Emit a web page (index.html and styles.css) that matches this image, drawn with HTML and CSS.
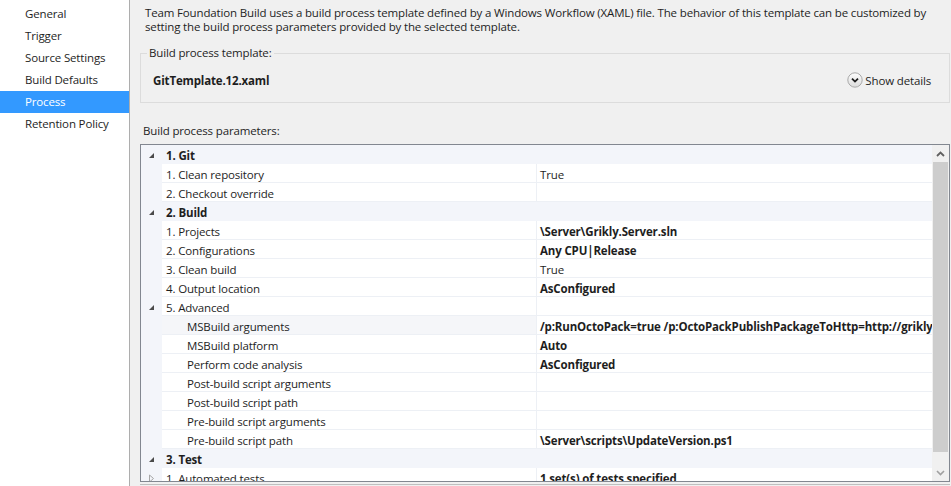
FILE: index.html
```html
<!DOCTYPE html>
<html>
<head>
<meta charset="utf-8">
<link rel="stylesheet" href="styles.css">
</head>
<body>
<nav class="nav">
  <div class="nav-item">General</div>
  <div class="nav-item">Trigger</div>
  <div class="nav-item">Source Settings</div>
  <div class="nav-item">Build Defaults</div>
  <div class="nav-item selected">Process</div>
  <div class="nav-item">Retention Policy</div>
</nav>
<main class="main">
  <div class="desc">
    <div class="line">Team Foundation Build uses a build process template defined by a Windows Workflow (XAML) file. The behavior of this template can be customized by</div>
    <div class="line">setting the build process parameters provided by the selected template.</div>
  </div>
  <fieldset class="group">
    <legend class="legend">Build process template:</legend>
    <div class="template-row">
      <span class="template-name">GitTemplate.12.xaml</span>
      <span class="details">
        <svg class="details-icon" width="16" height="16" viewBox="0 0 16 16">
          <defs>
            <linearGradient id="g" x1="0" y1="0" x2="0" y2="1">
              <stop offset="0" stop-color="#fdfdfd"/>
              <stop offset="1" stop-color="#dcdcdc"/>
            </linearGradient>
          </defs>
          <circle cx="8" cy="8" r="7.2" fill="url(#g)" stroke="#a9a9a9" stroke-width="1"/>
          <path d="M5 6.6 L8 9.6 L11 6.6" fill="none" stroke="#1e1e1e" stroke-width="1.8"/>
        </svg>
        Show details
      </span>
    </div>
  </fieldset>
  <div class="params-label">Build process parameters:</div>
  <div class="grid">
    <div class="rows">
      <div class="row cat"><span class="gut"><svg class="exp" width="7" height="7" viewBox="0 0 7 7"><path d="M6 1 L6 6 L1 6 Z" fill="#4a4a4a"/></svg></span><span class="name b">1. Git</span></div>
      <div class="row"><span class="gut"></span><span class="name">1. Clean repository</span><span class="val">True</span></div>
      <div class="row"><span class="gut"></span><span class="name">2. Checkout override</span><span class="val"></span></div>
      <div class="row cat"><span class="gut"><svg class="exp" width="7" height="7" viewBox="0 0 7 7"><path d="M6 1 L6 6 L1 6 Z" fill="#4a4a4a"/></svg></span><span class="name b">2. Build</span></div>
      <div class="row"><span class="gut"></span><span class="name">1. Projects</span><span class="val b">\Server\Grikly.Server.sln</span></div>
      <div class="row"><span class="gut"></span><span class="name">2. Configurations</span><span class="val b">Any CPU|Release</span></div>
      <div class="row"><span class="gut"></span><span class="name">3. Clean build</span><span class="val">True</span></div>
      <div class="row"><span class="gut"></span><span class="name">4. Output location</span><span class="val b">AsConfigured</span></div>
      <div class="row"><span class="gut"><svg class="exp" width="7" height="7" viewBox="0 0 7 7"><path d="M6 1 L6 6 L1 6 Z" fill="#4a4a4a"/></svg></span><span class="name">5. Advanced</span><span class="val"></span></div>
      <div class="row"><span class="gut"></span><span class="name sub hl">MSBuild arguments</span><span class="val b">/p:RunOctoPack=true /p:OctoPackPublishPackageToHttp=http://grikly.octopus/nuget/packages</span></div>
      <div class="row"><span class="gut"></span><span class="name sub">MSBuild platform</span><span class="val b">Auto</span></div>
      <div class="row"><span class="gut"></span><span class="name sub">Perform code analysis</span><span class="val b">AsConfigured</span></div>
      <div class="row"><span class="gut"></span><span class="name sub">Post-build script arguments</span><span class="val"></span></div>
      <div class="row"><span class="gut"></span><span class="name sub">Post-build script path</span><span class="val"></span></div>
      <div class="row"><span class="gut"></span><span class="name sub">Pre-build script arguments</span><span class="val"></span></div>
      <div class="row"><span class="gut"></span><span class="name sub">Pre-build script path</span><span class="val b">\Server\scripts\UpdateVersion.ps1</span></div>
      <div class="row cat"><span class="gut"><svg class="exp" width="7" height="7" viewBox="0 0 7 7"><path d="M6 1 L6 6 L1 6 Z" fill="#4a4a4a"/></svg></span><span class="name b">3. Test</span></div>
      <div class="row"><span class="gut"><svg class="exp" width="7" height="9" viewBox="0 0 7 9"><path d="M1.5 1 L5.5 4.5 L1.5 8 Z" fill="none" stroke="#a6a6a6" stroke-width="1"/></svg></span><span class="name">1. Automated tests</span><span class="val b">1 set(s) of tests specified.</span></div>
    </div>
    <div class="scrollbar">
      <div class="arrow">
        <svg width="9" height="6" viewBox="0 0 9 6"><path d="M1 5 L4.5 1.5 L8 5" fill="none" stroke="#606060" stroke-width="1.8"/></svg>
      </div>
      <div class="track"><div class="thumb"></div></div>
      <div class="arrow">
        <svg width="9" height="6" viewBox="0 0 9 6"><path d="M1 1 L4.5 4.5 L8 1" fill="none" stroke="#a0a0a0" stroke-width="1.6"/></svg>
      </div>
    </div>
  </div>
  <div class="bottom-line"></div>
</main>
</body>
</html>
```
FILE: styles.css
```css
* { box-sizing: border-box; }
html, body { margin: 0; padding: 0; }
body {
  width: 951px;
  height: 486px;
  overflow: hidden;
  display: flex;
  background: #f0f0f0;
  font-family: "Segoe UI", "Open Sans", sans-serif;
  font-size: 11.5px;
  letter-spacing: -0.15px;
  color: #1e1e1e;
}
.nav {
  width: 130px;
  flex: none;
  background: #ffffff;
  border-right: 1px solid #adadad;
  padding-top: 3px;
}
.nav-item {
  height: 22px;
  line-height: 21px;
  padding-left: 25px;
  white-space: nowrap;
}
.nav-item.selected {
  background: #3399ff;
  color: #ffffff;
}
.main {
  flex: 1;
  min-width: 0;
  padding: 6px 1px 0 10px;
  display: flex;
  flex-direction: column;
}
.desc { padding-left: 5px; }
.line { line-height: 14px; white-space: nowrap; }
.group {
  margin: 12px 0 0 0;
  padding: 13px 18px 15px 12px;
  border: 1px solid #dcdcdc;
  min-width: 0;
}
.legend {
  padding: 0 2px;
  margin-left: -6px;
  line-height: 14px;
}
.template-row {
  display: flex;
  justify-content: space-between;
  align-items: center;
  height: 14px;
}
.template-name { font-weight: bold; }
.details {
  display: flex;
  align-items: center;
  gap: 2px;
}
.details-icon { display: block; }
.params-label {
  margin-top: 20px;
  padding: 1px 0 0 3px;
  line-height: 14px;
}
.grid {
  margin-top: 6px;
  height: 338px;
  border: 1px solid #828790;
  display: flex;
  background: #ffffff;
}
.rows {
  flex: 1;
  min-width: 0;
  overflow: hidden;
}
.row {
  display: flex;
  height: 19px;
}
.gut {
  width: 21px;
  flex: none;
  background: #f3f5fa;
  display: flex;
  align-items: center;
  justify-content: center;
  padding-top: 1px;
}
.exp { display: block; }
.name, .val {
  height: 19px;
  padding-top: 3px;
  line-height: 15px;
  border-bottom: 1px solid #edf0f5;
  white-space: nowrap;
}
.name {
  width: 375px;
  flex: none;
  padding-left: 4px;
  border-right: 1px solid #edf0f5;
}
.name.sub { padding-left: 25px; }
.name.hl { background: #f5f6f9; }
.val {
  flex: 1;
  min-width: 0;
  padding-left: 3px;
  overflow: hidden;
}
.row.cat { background: #f3f5fa; }
.row.cat .name { border: none; flex: 1; }
.b { font-weight: bold; }
.scrollbar {
  width: 17px;
  flex: none;
  background: #f0f0f0;
  display: flex;
  flex-direction: column;
}
.arrow {
  height: 17px;
  display: flex;
  align-items: center;
  justify-content: center;
}
.track {
  flex: 1;
  padding: 0 1px;
}
.thumb {
  height: 290px;
  background: #cdcdcd;
}
.bottom-line {
  margin-top: 2px;
  height: 1px;
  background: #bfbfbf;
}
```
